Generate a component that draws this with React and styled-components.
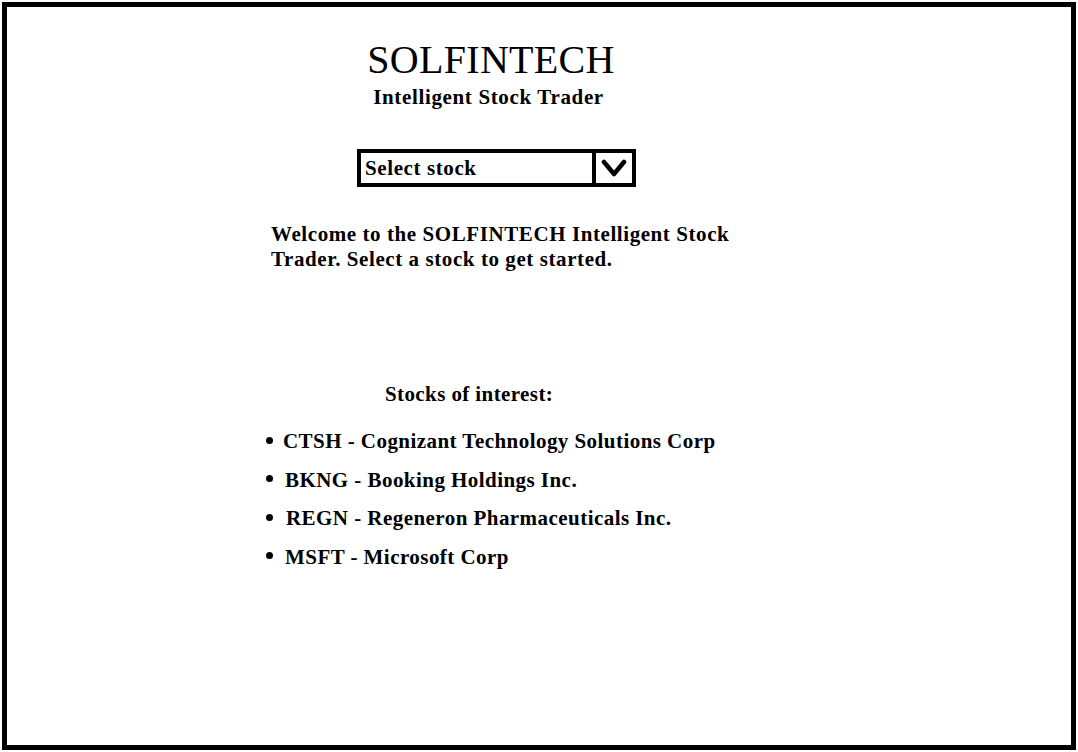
import React from "react";
import styled, { createGlobalStyle } from "styled-components";

const Global = createGlobalStyle`
  html, body { margin: 0; padding: 0; background: #fff; }
  body { font-family: "Liberation Serif", "DejaVu Serif", serif; color: #000; }
`;

const Frame = styled.div`
  box-sizing: border-box;
  margin: 2px;
  width: 1074px;
  height: 748px;
  border: 5px solid #000;
  background: #fff;
  display: flex;
  flex-direction: column;
  padding: 30px 0 0 258px;
`;

const Column = styled.div`
  width: 480px;
  display: flex;
  flex-direction: column;
`;

const Title = styled.h1`
  margin: 0;
  width: 460px;
  font-size: 40px;
  line-height: 46px;
  font-weight: 400;
  text-align: center;
  letter-spacing: 0.3px;
  padding-right: 8px;
  box-sizing: border-box;
`;

const Subtitle = styled.div`
  margin-top: 2px;
  width: 460px;
  font-size: 21px;
  line-height: 24px;
  font-weight: 700;
  text-align: center;
  letter-spacing: 0.65px;
  padding-right: 13px;
  box-sizing: border-box;
`;

const Select = styled.div`
  box-sizing: border-box;
  margin: 40px 0 0 92px;
  width: 279px;
  height: 38px;
  border: 4px solid #000;
  display: flex;
  align-items: stretch;
`;

const SelectLabel = styled.div`
  flex: 1;
  display: flex;
  align-items: center;
  padding-left: 4px;
  font-size: 21px;
  font-weight: 700;
  letter-spacing: 0.6px;
`;

const ArrowBox = styled.div`
  width: 36px;
  border-left: 4px solid #000;
  display: flex;
  align-items: center;
  justify-content: center;
`;

const Welcome = styled.p`
  margin: 35px 0 0 6px;
  width: 480px;
  font-size: 21px;
  line-height: 25px;
  font-weight: 700;
  letter-spacing: 0.58px;
`;

const SectionTitle = styled.div`
  margin: 110px 0 0 120px;
  font-size: 21px;
  line-height: 25px;
  font-weight: 700;
  letter-spacing: 0.4px;
`;

const List = styled.ul`
  list-style: none;
  margin: 22px 0 0 0;
  padding: 0;
  display: flex;
  flex-direction: column;
  gap: 13.5px;
`;

const Item = styled.li`
  display: flex;
  align-items: center;
  font-size: 21px;
  line-height: 25px;
  font-weight: 700;
  letter-spacing: 0.45px;
  white-space: nowrap;
`;

const Bullet = styled.span`
  width: 7px;
  height: 7px;
  border-radius: 50%;
  background: #000;
  margin: 0 ${(p) => p.$gap}px 3px 1px;
  flex: none;
`;

const stocks = [
  { text: "CTSH - Cognizant Technology Solutions Corp", gap: 10 },
  { text: "BKNG - Booking Holdings Inc.", gap: 12 },
  { text: "REGN - Regeneron Pharmaceuticals Inc.", gap: 13 },
  { text: "MSFT - Microsoft Corp", gap: 12 },
];

export default function App() {
  return (
    <>
      <Global />
      <Frame>
        <Column>
          <Title>SOLFINTECH</Title>
          <Subtitle>Intelligent Stock Trader</Subtitle>
          <Select>
            <SelectLabel>Select stock</SelectLabel>
            <ArrowBox>
              <svg width="26" height="20" viewBox="0 0 26 20">
                <polyline
                  points="3,4 13,16 23,4"
                  fill="none"
                  stroke="#000"
                  strokeWidth="4.5"
                  strokeLinecap="round"
                  strokeLinejoin="round"
                />
              </svg>
            </ArrowBox>
          </Select>
          <Welcome>
            Welcome to the SOLFINTECH Intelligent Stock Trader. Select a stock to get started.
          </Welcome>
          <SectionTitle>Stocks of interest:</SectionTitle>
          <List>
            {stocks.map((s) => (
              <Item key={s.text}>
                <Bullet $gap={s.gap} />
                {s.text}
              </Item>
            ))}
          </List>
        </Column>
      </Frame>
    </>
  );
}
